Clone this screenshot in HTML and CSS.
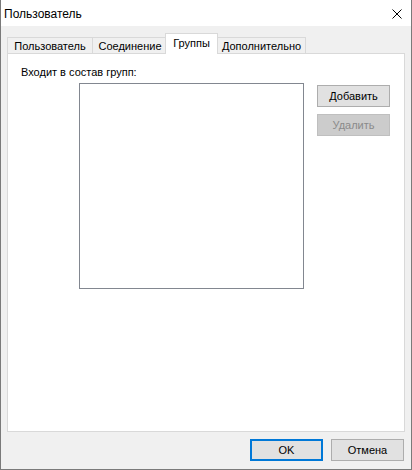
FILE: index.html
```html
<!DOCTYPE html>
<html lang="ru">
<head>
<meta charset="utf-8">
<title>Пользователь</title>
<link rel="stylesheet" href="styles.css">
</head>
<body>
<div class="window">
  <div class="titlebar">
    <span class="title">Пользователь</span>
    <span class="close">
      <svg width="10" height="10" viewBox="0 0 10 10"><path d="M0.5 0.5 L9.5 9.5 M9.5 0.5 L0.5 9.5" stroke="#000" stroke-width="1" fill="none"/></svg>
    </span>
  </div>
  <div class="body">
    <div class="tabs">
      <div class="tab tab-user">Пользователь</div>
      <div class="tab tab-conn">Соединение</div>
      <div class="tab tab-groups selected">Группы</div>
      <div class="tab tab-extra">Дополнительно</div>
    </div>
    <div class="panel">
      <div class="label">Входит в состав групп:</div>
      <div class="row">
        <div class="listbox"></div>
        <div class="side">
          <div class="btn">Добавить</div>
          <div class="btn disabled">Удалить</div>
        </div>
      </div>
    </div>
    <div class="footer">
      <div class="btn default">OK</div>
      <div class="btn">Отмена</div>
    </div>
  </div>
</div>
</body>
</html>
```
FILE: styles.css
```css
* { box-sizing: border-box; }
html, body { margin: 0; padding: 0; background: #ffffff; }
body { font-family: "Liberation Sans", Arial, sans-serif; font-size: 11px; color: #000; }

.window {
  width: 412px;
  height: 470px;
  border: 1px solid #7a7a7a;
  border-top: none;
  background: #f0f0f0;
  display: flex;
  flex-direction: column;
}

.titlebar {
  height: 26px;
  background: #ffffff;
  display: flex;
  align-items: center;
  justify-content: space-between;
  padding: 2px 9px 0 3px;
  font-size: 12px;
  flex: none;
}
.close { display: flex; width: 10px; height: 10px; }

.body {
  flex: 1;
  display: flex;
  flex-direction: column;
  padding: 7px 6px 8px 6px;
}

.tabs {
  height: 20px;
  display: flex;
  align-items: flex-end;
  flex: none;
  position: relative;
  z-index: 1;
}
.tab {
  height: 16px;
  border: 1px solid #d9d9d9;
  border-bottom: none;
  border-right: none;
  background: #f0f0f0;
  display: flex;
  align-items: center;
  justify-content: center;
  line-height: 13px;
  padding-top: 1px;
  white-space: nowrap;
}
.tab-user { width: 85px; }
.tab-conn { width: 75px; }
.tab-groups { width: 53px; }
.tab-extra { width: 90px; border-left: none; border-right: 1px solid #d9d9d9; padding-left: 2px; }
.tab.selected {
  height: 21px;
  margin: 0 -2px -1px -2px;
  padding: 0 0 2px 0;
  background: #ffffff;
  border-right: 1px solid #d9d9d9;
  position: relative;
  z-index: 2;
}

.panel {
  flex: 1;
  background: #ffffff;
  border: 1px solid #d9d9d9;
  padding: 12px 0 0 13px;
}
.label { line-height: 13px; }
.row {
  display: flex;
  margin-top: 4px;
  margin-left: 58px;
  align-items: flex-start;
}
.listbox {
  width: 225px;
  height: 206px;
  border: 1px solid #828790;
  background: #fff;
}
.side {
  display: flex;
  flex-direction: column;
  gap: 7px;
  margin-left: 13px;
  margin-top: 2px;
}

.btn {
  width: 73px;
  height: 22px;
  border: 1px solid #adadad;
  background: #e1e1e1;
  display: flex;
  align-items: center;
  justify-content: center;
  line-height: 13px;
}
.btn.disabled {
  background: #cccccc;
  border-color: #bfbfbf;
  color: #8a8a8a;
}
.btn.default {
  border: 2px solid #0078d7;
}

.footer {
  display: flex;
  justify-content: flex-end;
  gap: 8px;
  margin-top: 7px;
  padding-right: 1px;
  flex: none;
}
```
